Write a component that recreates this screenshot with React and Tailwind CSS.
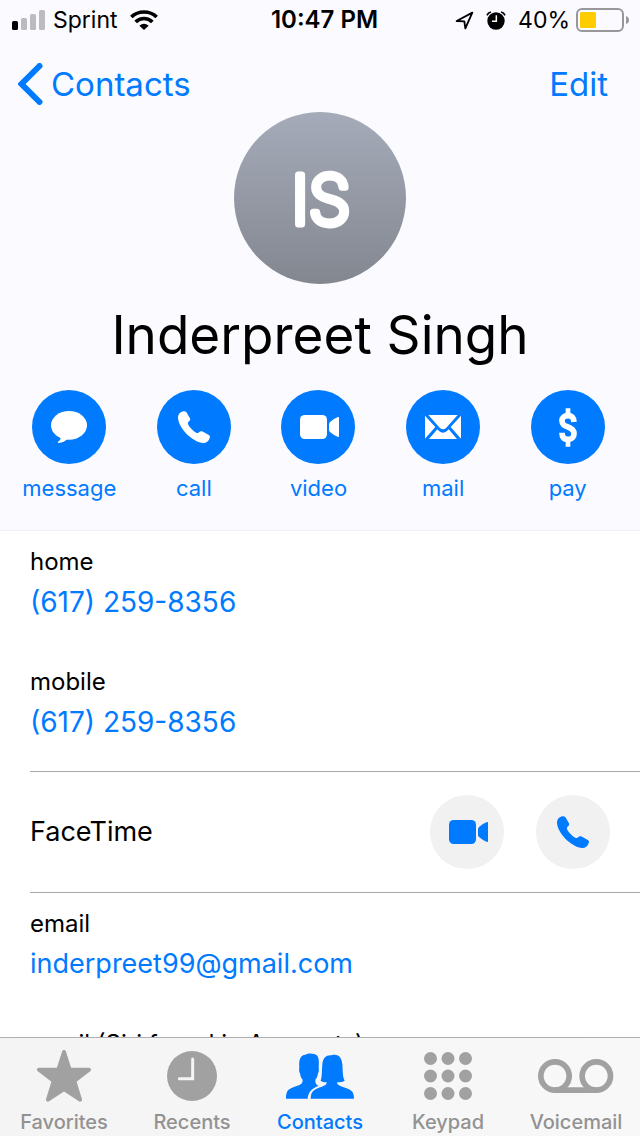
import React from "react";

function SignalIcon() {
  return (
    <svg width="33" height="20" viewBox="0 0 33 20" aria-hidden="true">
      <rect x="0" y="11" width="6" height="9" rx="1.6" fill="#000" />
      <rect x="9" y="8" width="6" height="12" rx="1.6" fill="#bcbbc0" />
      <rect x="18" y="4" width="6" height="16" rx="1.6" fill="#bcbbc0" />
      <rect x="27" y="0" width="6" height="20" rx="1.6" fill="#bcbbc0" />
    </svg>
  );
}

function WifiIcon() {
  return (
    <svg width="28" height="20" viewBox="0 0 84 60" aria-hidden="true">
      <g fill="none" stroke="#000" strokeWidth="11">
        <path d="M4 21C25 1 59 1 80 21" />
        <path d="M17 36C31 22 53 22 67 36" />
      </g>
      <path d="M42 60L28 47Q42 35 56 47Z" fill="#000" />
    </svg>
  );
}

function LocationIcon() {
  return (
    <svg width="19" height="19" viewBox="0 0 57 57" aria-hidden="true">
      <path d="M5 30L52 5L31 52L28 31Z" fill="none" stroke="#000" strokeWidth="5.500" strokeLinejoin="round" />
    </svg>
  );
}

function AlarmIcon() {
  return (
    <svg width="20" height="19" viewBox="0 0 60 57" aria-hidden="true">
      <circle cx="30" cy="30" r="26" fill="#000" />
      <path d="M3 13Q6 5 15 3M57 13Q54 5 45 3" fill="none" stroke="#000" strokeWidth="5" />
      <path d="M31 13V31H18" fill="none" stroke="#fff" strokeWidth="4.500" />
    </svg>
  );
}

function BatteryIcon() {
  return (
    <svg width="53" height="24" viewBox="0 0 53 24" aria-hidden="true">
      <rect x="1" y="1" width="46" height="22" rx="5" fill="none" stroke="#98979c" strokeWidth="2" />
      <rect x="4" y="4" width="16" height="16" rx="1.500" fill="#fc0" />
      <path d="M50 8Q53 9 53 12Q53 15 50 16Z" fill="#98979c" />
    </svg>
  );
}

function MessageIcon() {
  return (
    <svg width="36" height="32" viewBox="0 0 108 96" fill="currentColor" aria-hidden="true">
      <ellipse cx="54" cy="43" rx="54" ry="43" />
      <path d="M27 73Q33 86 21 92Q19 96 23 96Q40 95 49 84Z" />
    </svg>
  );
}

function PhoneIcon() {
  return (
    <svg width="32" height="32" viewBox="0 0 96 96" fill="currentColor" aria-hidden="true">
      <path d="M0 20C0 8 9 1 19 1C23 1 25 3 28 8L35 20C38 25 36 28 33 31C30 34 29 36 30 39C33 48 47 62 56 66C60 67 62 65 64 63C67 60 70 60 75 62L91 71C96 74 97 76 95 81C92 91 85 96 76 96C45 94 1 52 0 20Z" />
    </svg>
  );
}

function VideoIcon() {
  return (
    <svg width="41" height="24" viewBox="-6 0 123 72" fill="currentColor" aria-hidden="true">
      <rect width="81" height="72" rx="14" />
      <path d="M87 28Q87 23 91 20Q101 11 114 6Q117 5 117 8V64Q117 67 114 66Q101 61 91 52Q87 49 87 45Z" />
    </svg>
  );
}

function MailIcon() {
  return (
    <svg width="36" height="24" viewBox="0 0 108 72" fill="currentColor" aria-hidden="true">
      <path d="M0 2L31 36L0 71ZM108 2L77 36L108 71ZM10 0H98L64 38Q54 48 44 38ZM12 72L37 43L42 48Q54 58 66 48L71 43L96 72Z" />
    </svg>
  );
}

function PayIcon() {
  return (
    <svg width="18" height="39" viewBox="0 0 54 117" fill="none" stroke="currentColor" strokeWidth="17" aria-hidden="true">
      <path d="M27 1V22M27 95V116" strokeWidth="14" />
      <path d="M45 42C44 29 39 23 27 23C15 23 9 29 9 38C9 50 17 53 27 57C38 61 45 65 45 77C45 87 39 94 27 94C15 94 9 88 9 74" />
    </svg>
  );
}

function StarIcon() {
  return (
    <svg width="54" height="52" viewBox="0 0 162 156" aria-hidden="true">
      <path
        d="M81 6L98 59H156L112 93L129 149L81 117L33 149L50 93L6 59H64Z"
        fill="currentColor"
        stroke="currentColor"
        strokeWidth="12"
        strokeLinejoin="round"
      />
    </svg>
  );
}

function ClockIcon() {
  return (
    <svg width="50" height="50" viewBox="0 0 150 150" aria-hidden="true">
      <circle cx="75" cy="75" r="75" fill="currentColor" />
      <path d="M77 24V83H37" fill="none" stroke="#f5f5f5" strokeWidth="9" strokeLinecap="round" strokeLinejoin="miter" />
    </svg>
  );
}

function PeopleIcon() {
  return (
    <svg width="68" height="46" viewBox="0 0 204 138" fill="currentColor" aria-hidden="true">
      <path d="M0 137C0 111 8 107 32 99C46 94 50 91 50 80C45 75 43 68 42 61C39 57 39 50 40 42C38 20 44 5 58 5C66 0 78 1 84 3C98 5 100 20 98 42C99 50 99 57 96 61C95 68 93 75 88 80C88 91 90 94 98 99C78 105 66 119 65 137Z" />
      <path d="M74 137C74 113 86 108 108 101C119 97 122 94 122 88C114 88 108 86 104 83C109 70 107 52 109 34C111 14 120 6 136 7C158 1 167 14 169 34C171 56 169 70 176 83C171 87 163 88 153 88C153 94 157 97 168 101C196 109 204 114 204 137Z" />
    </svg>
  );
}

function KeypadIcon() {
  const spots = [6.5, 24, 41.5];
  return (
    <svg width="48" height="48" viewBox="0 0 48 48" fill="currentColor" aria-hidden="true">
      {spots.map((y) => spots.map((x) => <circle key={`${x}-${y}`} cx={x} cy={y} r="6.5" />))}
    </svg>
  );
}

function VoicemailIcon() {
  return (
    <svg width="76" height="34" viewBox="0 0 228 102" fill="none" stroke="currentColor" strokeWidth="17" aria-hidden="true">
      <circle cx="51" cy="51" r="42.500" />
      <circle cx="175" cy="51" r="42.500" />
      <path d="M51 93.500H175" />
    </svg>
  );
}

const actions = [
  { label: "message", Icon: MessageIcon },
  { label: "call", Icon: PhoneIcon },
  { label: "video", Icon: VideoIcon },
  { label: "mail", Icon: MailIcon },
  { label: "pay", Icon: PayIcon },
];

const tabs = [
  { label: "Favorites", Icon: StarIcon },
  { label: "Recents", Icon: ClockIcon },
  { label: "Contacts", Icon: PeopleIcon, active: true },
  { label: "Keypad", Icon: KeypadIcon },
  { label: "Voicemail", Icon: VoicemailIcon },
];

function StatusBar() {
  return (
    <div className="grid h-10 grid-cols-[1fr_auto_1fr] items-center pr-[11px] pl-3 text-[23px] leading-7">
      <div className="flex items-center gap-2">
        <SignalIcon />
        <span>Sprint</span>
        <span className="pl-1">
          <WifiIcon />
        </span>
      </div>
      <div className="pl-2 text-2xl leading-7 font-semibold">10:47 PM</div>
      <div className="flex items-center justify-end gap-3">
        <LocationIcon />
        <AlarmIcon />
        <div className="flex items-center gap-[6px]">
          <span>40%</span>
          <BatteryIcon />
        </div>
      </div>
    </div>
  );
}

function Field({ label, children }) {
  return (
    <div className="h-[120px] pt-[15px]">
      <dt className="text-2xl leading-8">{label}</dt>
      <dd className="leading-[48px] text-[#007aff]">{children}</dd>
    </div>
  );
}

export default function App() {
  return (
    <div className="flex h-screen flex-col bg-white font-['Inter','Liberation_Sans',sans-serif] text-black">
      <header className="shrink-0 border-b border-[#efeff4] bg-[#fafaff]">
        <StatusBar />
        <nav className="flex h-[72px] items-center justify-between pt-4 pr-8 pl-[18px] text-[33px] leading-10 text-[#007aff]">
          <a href="#contacts" className="flex items-center gap-2">
            <svg width="25" height="42" viewBox="0 0 25 42" aria-hidden="true">
              <path d="M21.500 3L3.500 21L21.500 39" fill="none" stroke="currentColor" strokeWidth="6" strokeLinecap="round" strokeLinejoin="miter" />
            </svg>
            Contacts
          </a>
          <button type="button">Edit</button>
        </nav>
        <div className="mx-auto size-[172px] rounded-full bg-linear-to-b from-[#a5abb9] to-[#838790]">
          <svg className="size-full" viewBox="0 0 172 172" role="img" aria-label="IS">
            <text x="87" y="112" textAnchor="middle" fontSize="67" fontWeight="200" fill="#fff" stroke="#fff" strokeWidth="7" strokeLinejoin="round">
              IS
            </text>
          </svg>
        </div>
        <h1 className="mt-4 text-center text-[53px] leading-[70px]">Inderpreet Singh</h1>
        <div className="mt-5 grid grid-cols-5 pr-[10px] pb-[26px] pl-[7px]">
          {actions.map(({ label, Icon }) => (
            <button key={label} type="button" className="flex flex-col items-center gap-2 text-[22px] leading-8 text-[#007aff]">
              <span className="flex size-[74px] items-center justify-center rounded-full bg-[#007aff] text-white">
                <Icon />
              </span>
              {label}
            </button>
          ))}
        </div>
      </header>

      <main className="min-h-0 flex-1 overflow-y-auto pl-[30px] [scrollbar-width:none]">
        <dl className="border-b border-[#a9a9ab] text-[28px]">
          <Field label="home">
            <a href="tel:+16172598356">(617) 259-8356</a>
          </Field>
          <Field label="mobile">
            <a href="tel:+16172598356">(617) 259-8356</a>
          </Field>
        </dl>
        <section className="flex h-[121px] items-center justify-between border-b border-[#a9a9ab] pr-[30px]">
          <h2 className="text-[27px] leading-8">FaceTime</h2>
          <div className="flex gap-8 text-[#007aff]">
            <button type="button" aria-label="FaceTime video" className="flex size-[74px] items-center justify-center rounded-full bg-[#f1f1f1]">
              <VideoIcon />
            </button>
            <button type="button" aria-label="FaceTime audio" className="flex size-[74px] items-center justify-center rounded-full bg-[#f1f1f1]">
              <PhoneIcon />
            </button>
          </div>
        </section>
        <dl className="text-[27px]">
          <Field label="email">
            <a href="mailto:inderpreet99@gmail.com">inderpreet99@gmail.com</a>
          </Field>
          <Field label="email (Siri found in Accounts)" />
        </dl>
      </main>

      <nav className="grid shrink-0 grid-cols-5 border-t border-[#b0b0b1] bg-linear-to-r from-[#f4f4f4] to-[#f8f8f8]">
        {tabs.map(({ label, Icon, active }) => (
          <a
            key={label}
            href={`#${label.toLowerCase()}`}
            aria-current={active ? "page" : undefined}
            className={`flex flex-col items-center pb-[2px] text-xl leading-6 font-medium ${active ? "text-[#007aff]" : "text-[#929292]"}`}
          >
            <span className={`flex h-[72px] items-center pt-1 ${active ? "text-[#007aff]" : "text-[#a1a1a1]"}`}>
              <Icon />
            </span>
            {label}
          </a>
        ))}
      </nav>
    </div>
  );
}
